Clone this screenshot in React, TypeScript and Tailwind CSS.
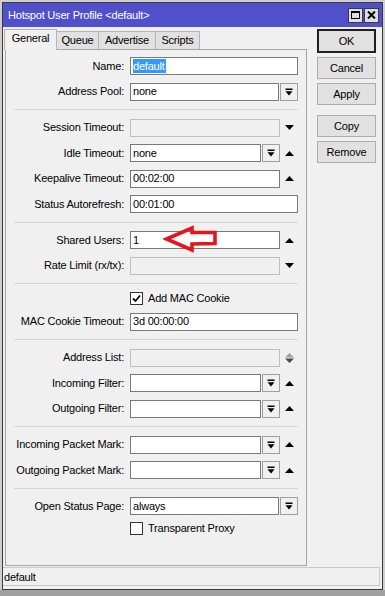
import React from "react";

function DropIcon() {
  return (
    <svg width="8" height="8" viewBox="0 0 8 8">
      <rect x="0.5" y="0.5" width="7" height="1.5" fill="#000" />
      <path d="M0.5 3.2 H7.5 L4 7.5 Z" fill="#000" />
    </svg>
  );
}

function DropBtn() {
  return (
    <div className="w-[18px] h-[18px] shrink-0 border border-[#a0a0a0] bg-[#f0f0f0] flex items-center justify-center">
      <DropIcon />
    </div>
  );
}

function Up() {
  return (
    <div className="w-[18px] flex justify-center shrink-0">
      <svg width="9" height="5" viewBox="0 0 9 5">
        <path d="M0 5 L4.5 0 L9 5 Z" fill="#000" />
      </svg>
    </div>
  );
}

function Down() {
  return (
    <div className="w-[18px] flex justify-center shrink-0">
      <svg width="9" height="5" viewBox="0 0 9 5">
        <path d="M0 0 L9 0 L4.5 5 Z" fill="#000" />
      </svg>
    </div>
  );
}

function UpDown() {
  return (
    <div className="w-[18px] flex justify-center shrink-0">
      <svg width="9" height="10" viewBox="0 0 9 10">
        <path d="M0 4.5 L4.5 0 L9 4.5 Z" fill="#a0a0a0" />
        <path d="M0 5.5 L9 5.5 L4.5 10 Z" fill="#4a4a4a" />
      </svg>
    </div>
  );
}

function Box({
  w,
  children,
  disabled,
}: {
  w: string;
  children?: React.ReactNode;
  disabled?: boolean;
}) {
  return (
    <div
      className={
        w +
        " h-[18px] shrink-0 flex items-center pl-[2px] " +
        (disabled ? "border border-[#bfbfbf] bg-[#f0f0f0]" : "border border-[#7a7a7a] bg-white")
      }
    >
      {children}
    </div>
  );
}

function Row({ label, children }: { label: string; children: React.ReactNode }) {
  return (
    <div className="h-[25.5px] flex items-center">
      <div className="w-[118px] text-right whitespace-nowrap">{label}</div>
      <div className="ml-[6px] w-[168px] flex items-center">{children}</div>
    </div>
  );
}

function Sep() {
  return (
    <div className="h-[10.5px] flex items-center">
      <div className="ml-[8px] w-[284px] h-px bg-[#d6d6d6]" />
    </div>
  );
}

function Check({ label, checked }: { label: string; checked?: boolean }) {
  return (
    <div className="h-[20px] flex items-center pl-[124px]">
      <div className="w-[13px] h-[13px] border border-[#333] bg-white flex items-center justify-center">
        {checked && (
          <svg width="11" height="11" viewBox="0 0 11 11">
            <path d="M2 5.5 L4.5 8 L9 2.5" stroke="#000" strokeWidth="1.8" fill="none" />
          </svg>
        )}
      </div>
      <span className="ml-[5px]">{label}</span>
    </div>
  );
}

function Btn({ label, primary, h }: { label: string; primary?: boolean; h: string }) {
  return (
    <div
      className={
        "w-[59px] " +
        h +
        " flex items-center justify-center bg-[#e1e1e1] " +
        (primary ? "border-2 border-[#202020]" : "border border-[#adadad]")
      }
    >
      {label}
    </div>
  );
}

export default function App() {
  return (
    <div className="relative w-[385px] h-[596px] flex flex-col bg-[#cfcfcf] overflow-hidden font-['Liberation_Sans',Arial,sans-serif] text-[11px] tracking-[-0.2px] text-black leading-none">
      <div className="h-[2px] shrink-0" />
      <div className="ml-[2px] w-[381px] h-[588px] shrink-0 border border-[#3a3a3a] bg-[#f0f0f0] flex flex-col">
        {/* Title bar */}
        <div className="h-[24px] shrink-0 bg-[#5050cc] flex items-center pl-[5px] pr-[3px]">
          <span className="text-white">Hotspot User Profile &lt;default&gt;</span>
          <div className="ml-auto flex gap-[1px]">
            <div className="w-[15px] h-[15px] border border-[#3a3a3a] bg-[#dedede] flex items-center justify-center">
              <div className="w-[9px] h-[8px] border border-black border-t-2" />
            </div>
            <div className="w-[15px] h-[15px] border border-[#3a3a3a] bg-[#dedede] flex items-center justify-center">
              <svg width="9" height="8" viewBox="0 0 9 8">
                <path d="M1 0.5 L8 7.5 M8 0.5 L1 7.5" stroke="#000" strokeWidth="2" />
              </svg>
            </div>
          </div>
        </div>

        {/* Body */}
        <div className="flex h-[539px] shrink-0">
          <div className="flex flex-col">
            <div className="h-[22px] flex items-end pl-[1px]">
              <div className="relative z-10 -mb-px w-[53px] h-[21px] border border-b-0 border-[#b5b5b5] bg-[#f0f0f0] flex items-center justify-center pb-[3px]">
                General
              </div>
              <div className="w-[42px] h-[18px] border-t border-r border-[#b5b5b5] bg-[#e1e1e1] flex items-center justify-center">
                Queue
              </div>
              <div className="w-[57px] h-[18px] border-t border-r border-[#b5b5b5] bg-[#e1e1e1] flex items-center justify-center">
                Advertise
              </div>
              <div className="w-[44px] h-[18px] border-t border-r border-[#b5b5b5] bg-[#e1e1e1] flex items-center justify-center">
                Scripts
              </div>
            </div>
            <div className="ml-[2px] w-[302px] h-[517px] border border-[#a6a6a6] pt-[3.25px]">
              <Row label="Name:">
                <Box w="w-[168px]">
                  <span className="bg-[#3399ff] text-white h-[14px] flex items-center pr-px">default</span>
                </Box>
              </Row>
              <Row label="Address Pool:">
                <Box w="w-[149px]">none</Box>
                <div className="ml-[1px]">
                  <DropBtn />
                </div>
              </Row>
              <Sep />
              <Row label="Session Timeout:">
                <Box w="w-[150px]" disabled />
                <Down />
              </Row>
              <Row label="Idle Timeout:">
                <Box w="w-[131px]">none</Box>
                <div className="ml-[1px]">
                  <DropBtn />
                </div>
                <Up />
              </Row>
              <Row label="Keepalive Timeout:">
                <Box w="w-[150px]">00:02:00</Box>
                <Up />
              </Row>
              <Row label="Status Autorefresh:">
                <Box w="w-[168px]">00:01:00</Box>
              </Row>
              <Sep />
              <Row label="Shared Users:">
                <Box w="w-[150px]">1</Box>
                <Up />
              </Row>
              <Row label="Rate Limit (rx/tx):">
                <Box w="w-[150px]" disabled />
                <Down />
              </Row>
              <Sep />
              <Check label="Add MAC Cookie" checked />
              <Row label="MAC Cookie Timeout:">
                <Box w="w-[168px]">3d 00:00:00</Box>
              </Row>
              <Sep />
              <Row label="Address List:">
                <Box w="w-[150px]" disabled />
                <UpDown />
              </Row>
              <Row label="Incoming Filter:">
                <Box w="w-[131px]" />
                <div className="ml-[1px]">
                  <DropBtn />
                </div>
                <Up />
              </Row>
              <Row label="Outgoing Filter:">
                <Box w="w-[131px]" />
                <div className="ml-[1px]">
                  <DropBtn />
                </div>
                <Up />
              </Row>
              <Sep />
              <Row label="Incoming Packet Mark:">
                <Box w="w-[131px]" />
                <div className="ml-[1px]">
                  <DropBtn />
                </div>
                <Up />
              </Row>
              <Row label="Outgoing Packet Mark:">
                <Box w="w-[131px]" />
                <div className="ml-[1px]">
                  <DropBtn />
                </div>
                <Up />
              </Row>
              <Sep />
              <Row label="Open Status Page:">
                <Box w="w-[149px]">always</Box>
                <div className="ml-[1px]">
                  <DropBtn />
                </div>
              </Row>
              <Check label="Transparent Proxy" />
            </div>
          </div>

          <div className="ml-[10px] pt-[2px] flex flex-col">
            <Btn label="OK" primary h="h-[24px]" />
            <div className="mt-[4px]">
              <Btn label="Cancel" h="h-[22px]" />
            </div>
            <div className="mt-[4px]">
              <Btn label="Apply" h="h-[22px]" />
            </div>
            <div className="mt-[10px]">
              <Btn label="Copy" h="h-[22px]" />
            </div>
            <div className="mt-[4px]">
              <Btn label="Remove" h="h-[22px]" />
            </div>
          </div>
        </div>

        {/* Status bar */}
        <div className="mt-[1px] h-[19px] shrink-0 mr-[2px] border border-l-0 border-[#c8c8c8] flex items-center pl-[1px] pt-[2px]">
          default
        </div>
      </div>
      <div className="flex-1 bg-[#a0a0a0]" />

      {/* red annotation arrow */}
      <svg
        className="absolute left-[163px] top-[225px]"
        width="56"
        height="28"
        viewBox="0 0 56 28"
      >
        <path
          d="M3.5 14 L29 3 L29 7.5 L52 7.5 L52 18.5 L29 19 L29 25 Z"
          fill="none"
          stroke="#e3161e"
          strokeWidth="3.6"
          strokeLinejoin="miter"
        />
      </svg>
    </div>
  );
}
